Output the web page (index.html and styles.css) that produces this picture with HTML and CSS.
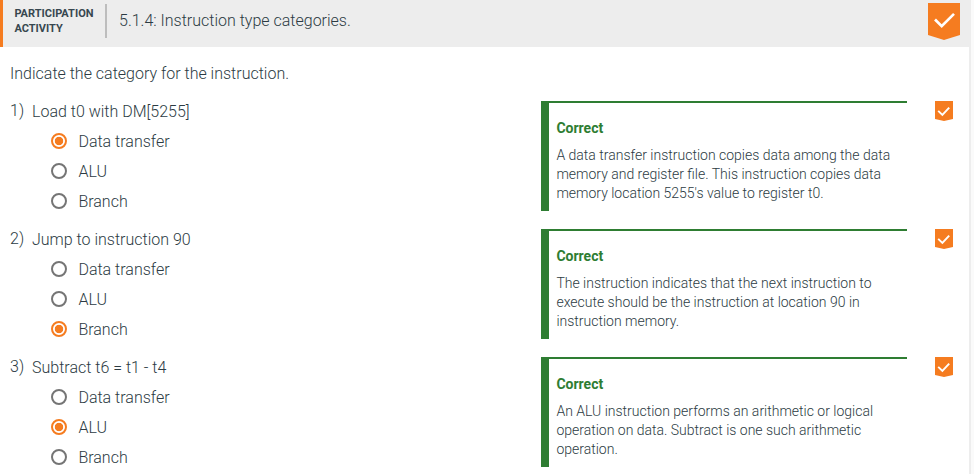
FILE: index.html
```
<!DOCTYPE html>
<html lang="en">
<head>
<meta charset="utf-8">
<title>5.1.4: Instruction type categories</title>
<link rel="stylesheet" href="styles.css">
</head>
<body>
<svg class="defs" aria-hidden="true">
  <symbol id="badge" viewBox="0 0 32 37">
    <path class="badge-fill" d="M0 0H32V32L16 37L0 32Z"/>
    <path class="badge-check" d="M7 16.5L13.7 23.2L26 10.9"/>
  </symbol>
  <symbol id="badge-small" viewBox="0 0 18 20">
    <path class="badge-fill" d="M0 0H18V18L9 20L0 18Z"/>
    <path class="badge-check small" d="M3.2 9.8L7.4 14L14.2 6.6"/>
  </symbol>
</svg>
<main class="activity">
  <header class="header">
    <div class="kind">PARTICIPATION<br>ACTIVITY</div>
    <h1 class="title">5.1.4: Instruction type categories.</h1>
    <svg class="header-badge"><use href="#badge"/></svg>
  </header>
  <div class="content">
    <p class="intro">Indicate the category for the instruction.</p>

    <section class="question">
      <div class="number">1)</div>
      <div class="body">
        <div class="prompt">Load t0 with DM[5255]</div>
        <div class="option"><span class="radio checked"></span><span class="label">Data transfer</span></div>
        <div class="option"><span class="radio"></span><span class="label">ALU</span></div>
        <div class="option"><span class="radio"></span><span class="label">Branch</span></div>
      </div>
      <div class="feedback">
        <h2 class="result">Correct</h2>
        <p class="explanation">A data transfer instruction copies data among the data<br>memory and register file. This instruction copies data<br>memory location 5255's value to register t0.</p>
      </div>
      <svg class="question-badge"><use href="#badge-small"/></svg>
    </section>

    <section class="question">
      <div class="number">2)</div>
      <div class="body">
        <div class="prompt">Jump to instruction 90</div>
        <div class="option"><span class="radio"></span><span class="label">Data transfer</span></div>
        <div class="option"><span class="radio"></span><span class="label">ALU</span></div>
        <div class="option"><span class="radio checked"></span><span class="label">Branch</span></div>
      </div>
      <div class="feedback">
        <h2 class="result">Correct</h2>
        <p class="explanation">The instruction indicates that the next instruction to<br>execute should be the instruction at location 90 in<br>instruction memory.</p>
      </div>
      <svg class="question-badge"><use href="#badge-small"/></svg>
    </section>

    <section class="question">
      <div class="number">3)</div>
      <div class="body">
        <div class="prompt">Subtract t6 = t1 - t4</div>
        <div class="option"><span class="radio"></span><span class="label">Data transfer</span></div>
        <div class="option"><span class="radio checked"></span><span class="label">ALU</span></div>
        <div class="option"><span class="radio"></span><span class="label">Branch</span></div>
      </div>
      <div class="feedback">
        <h2 class="result">Correct</h2>
        <p class="explanation">An ALU instruction performs an arithmetic or logical<br>operation on data. Subtract is one such arithmetic<br>operation.</p>
      </div>
      <svg class="question-badge"><use href="#badge-small"/></svg>
    </section>
  </div>
</main>
</body>
</html>
```
FILE: styles.css
```
* { box-sizing: border-box; }

body {
  margin: 0;
  height: 474px;
  overflow: hidden;
  background: #fafafa;
  color: #2c3b43;
  font-family: Roboto, "Liberation Sans", sans-serif;
  font-size: 16px;
  font-weight: 300;
}

h1, h2, p { margin: 0; }

.defs { display: none; }

.activity {
  width: 971px;
  height: 474px;
}

.header {
  display: flex;
  align-items: flex-start;
  height: 47px;
  padding: 3px 11px 0 11px;
  border-left: 3px solid #f57c20;
  background: #ededed;
}

.kind {
  width: 93px;
  height: 34px;
  margin-top: 1px;
  padding: 2px 0 0 0.4px;
  border-right: 2px solid #bdbdbd;
  color: #37474f;
  font-size: 11px;
  font-weight: 700;
  line-height: 15px;
  white-space: nowrap;
}

.title {
  flex: 1;
  padding-left: 12px;
  font-size: 16px;
  font-weight: 300;
  line-height: 36px;
}

.header-badge { width: 32px; height: 37px; }

.badge-fill { fill: #f57c20; }

.badge-check {
  fill: none;
  stroke: #fff;
  stroke-width: 2.7;
}

.badge-check.small { stroke-width: 1.9; }

.content {
  height: 427px;
  padding: 17px 0 0 10px;
  border-right: 2px solid #ededed;
  background: #fff;
  overflow: hidden;
}

.intro {
  height: 37px;
  line-height: 20px;
}

.question {
  display: grid;
  grid-template-columns: 22px 509px 366px 18px;
  align-items: start;
  height: 128px;
}

.question-badge {
  width: 18px;
  height: 20px;
  margin-left: 28px;
  overflow: visible;
}

.number { line-height: 20px; }

.prompt {
  height: 25px;
  line-height: 22px;
}

.option {
  display: flex;
  align-items: center;
  gap: 11.4px;
  height: 30px;
  padding-left: 19px;
}

.radio {
  width: 16px;
  height: 16px;
  border: 2px solid #757575;
  border-radius: 50%;
}

.radio.checked {
  border-color: #f57c20;
  background: radial-gradient(circle, #f57c20 3.8px, #fff 4.6px);
}

.feedback {
  height: 110px;
  padding: 16px 0 0 7.4px;
  border-top: 2px solid #2e7d32;
  border-left: 8px solid #2e7d32;
}

.result {
  height: 27px;
  color: #2e7d32;
  font-size: 14px;
  font-weight: 700;
  line-height: 19px;
}

.explanation {
  font-size: 14px;
  line-height: 19px;
  white-space: nowrap;
}
```
